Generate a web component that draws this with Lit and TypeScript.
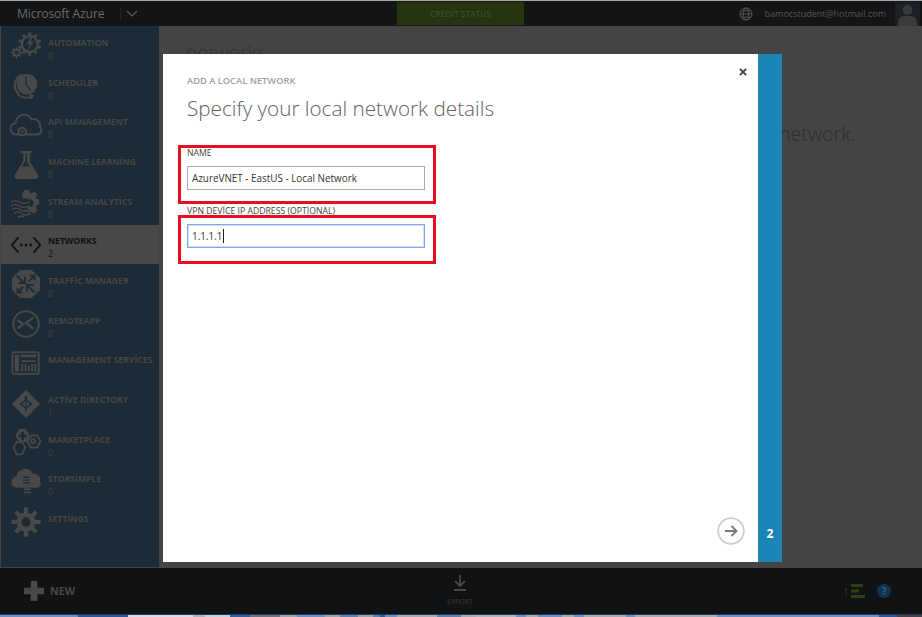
import { LitElement, html, css, svg } from "lit";
import { customElement } from "lit/decorators.js";

const ic = (body: unknown) => html`<svg class="ico" viewBox="0 0 34 34">${body}</svg>`;

const gear = (cx: number, cy: number, r: number, teeth: number, w: number, sw: number) => {
  const t = [];
  for (let i = 0; i < teeth; i++) {
    t.push(svg`<rect x=${cx - w / 2} y=${cy - r - sw * 1.6} width=${w} height=${sw * 1.8} transform="rotate(${(i * 360) / teeth} ${cx} ${cy})"/>`);
  }
  return svg`<g class="f">${t}</g><circle class="s" cx=${cx} cy=${cy} r=${r} stroke-width=${sw}/>`;
};

const icons: Record<string, unknown> = {
  automation: ic(svg`
    ${gear(21, 15, 8.5, 10, 3, 2.4)}
    <path class="f" d="M23 5l-5 10h3l-2 7 6-10h-3l3-7z"/>
    ${gear(7, 24, 3.2, 8, 1.8, 1.8)}`),
  scheduler: ic(svg`
    <path class="s" stroke-width="2.4" d="M10 26A12 12 0 0 1 13 5"/>
    <circle class="f" cx="18" cy="15" r="11"/>
    <path fill="none" stroke="#1c2b35" stroke-width="1.5" d="M17 7v8l5 7"/>
    <path class="s" stroke-width="2" d="M8 26q8 6 16 2"/><path class="f" d="M20 25l6 2-4 5z"/>`),
  api: ic(svg`
    <path class="s" stroke-width="2.2" d="M10 27H7a6 6 0 0 1-1-12 9 9 0 0 1 17-4 7 7 0 0 1 9 8 5 5 0 0 1-2 8H16"/>
    <circle class="s" cx="13" cy="24" r="4" stroke-width="2.2"/><circle class="f" cx="13" cy="24" r="1.4"/>`),
  ml: ic(svg`
    <path class="f" d="M11 2h12v2.500h-2V13l9 15q1 4-3 4H8q-4 0-3-4l9-15V4.500h-3z"/>
    <path fill="#1c2b35" d="M16.500 4.500h1.500v9l3 5H12.500l4-6z"/>`),
  stream: ic(svg`
    <path class="f" d="M13 5l2-4h5l2 4 4-2 3 3-2 4 4 1v5l-4 2 2 5-3 3-5-2-2 2V10h-6z"/>
    <circle fill="#1c2b35" cx="21" cy="15" r="4"/>
    <path class="s" stroke-width="1.600" d="M1 14q5-3 9 0t11 0M1 18q5-3 9 0t11 0M2 22q5-3 9 0t10 0M4 26q5-3 8 0t10 0M8 30q4-2 7 0"/>`),
  networks: html`<svg class="ico" viewBox="0 0 34 34"><path fill="none" stroke="#111" stroke-width="2" d="M9 9l-7 8 7 8M25 9l7 8-7 8"/><g fill="#111"><circle cx="12" cy="17" r="1.500"/><circle cx="17" cy="17" r="1.500"/><circle cx="22" cy="17" r="1.500"/></g></svg>`,
  traffic: ic(svg`
    <path class="f" d="M11 2h12l9 9v12l-9 9H11l-9-9V11z"/>
    <path fill="none" stroke="#1c2b35" stroke-width="2" d="M7 8l8 8M16 9v7H9M26 26l-8-8M18 25v-7h7M8 26l6-6M8 21v5h5M26 8l-6 6M26 13V8h-5"/>`),
  remote: ic(svg`
    <circle class="s" cx="17" cy="17" r="13.500" stroke-width="2.200"/>
    <path class="s" stroke-width="2.500" d="M25 10l-8 6 8 6M8 13l6 4-6 5"/>`),
  mgmt: ic(svg`
    <rect class="s" x="2.500" y="5.500" width="28" height="23" rx="2" stroke-width="2"/>
    <rect class="f" x="5" y="8" width="4.500" height="18"/>
    <path class="f" d="M11 8h17v3H11zM12 14h15v2H12zM12 18h2v8h-2zM15.500 18h2v8h-2zM19 20h2v6h-2zM22.500 18h2v8h-2zM26 18h2v8h-2z"/>`),
  ad: ic(svg`
    <path class="f" d="M17 3l15 15-15 15L2 18z"/>
    <path fill="none" stroke="#1c2b35" stroke-width="1.300" d="M17 10v16M17 13l-5 5 5 5M17 13l5 5-5 5"/>
    <circle fill="#1c2b35" cx="17" cy="11" r="1.500"/><circle fill="#1c2b35" cx="12" cy="18" r="1.500"/><circle fill="#1c2b35" cx="22" cy="18" r="1.500"/>`),
  market: ic(svg`
    <path class="f" d="M15 2h7l4 7-4 7h-7l-4-7z" transform="translate(-5 0)"/>
    <path fill="#1c2b35" d="M12 5h3v3h3v3h-3v3h-3v-3H9V8h3z"/>
    <path class="s" stroke-width="1.800" d="M24 9h6l3.500 6-3.500 7h-7l-3.500-7zM8 16h6l3 6-3 7H8l-3-7z" transform="translate(-1 0)"/>
    <circle class="s" cx="24.500" cy="15" r="2.200" stroke-width="1.800"/>`),
  storsimple: ic(svg`
    <path class="f" d="M8 23a6 6 0 0 1-1-12 9 9 0 0 1 17-3 7 7 0 0 1 8 8 5 5 0 0 1-2 7z"/>
    <path d="M14 12h7M14 15h7M14 18h7" stroke="#1c2b35" stroke-width="1.500"/>
    <path d="M15 21h7M15 24.500h7M15 28h7" stroke="#484848" stroke-width="1.800"/>`),
  settings: ic(svg`${gear(17, 17, 7.5, 8, 4.5, 5)}`),
};

const navItems = [
  ["AUTOMATİON", "0", "automation"],
  ["SCHEDULER", "0", "scheduler"],
  ["API MANAGEMENT", "0", "api"],
  ["MACHİNE LEARNİNG", "0", "ml"],
  ["STREAM ANALYTİCS", "0", "stream"],
  ["NETWORKS", "2", "networks"],
  ["TRAFFİC MANAGER", "0", "traffic"],
  ["REMOTEAPP", "0", "remote"],
  ["MANAGEMENT SERVİCES", "", "mgmt"],
  ["ACTİVE DİRECTORY", "1", "ad"],
  ["MARKETPLACE", "0", "market"],
  ["STORSİMPLE", "0", "storsimple"],
  ["SETTİNGS", "", "settings"],
];

const taskbar: [number, string][] = [
  [78, "#6e8fc4"], [50, "#2a5a9e"], [65, "#d5deea"], [12, "#b0b5b8"], [25, "#c8d2dc"], [20, "#2f5f9f"],
  [30, "#707478"], [17, "#a0a4a8"], [28, "#6e8fc4"], [15, "#a0a4a8"], [18, "#6080b4"], [15, "#a0a4a8"],
  [7, "#6080b4"], [5, "#2a5a9e"], [12, "#6e8fc4"], [40, "#a8acac"], [24, "#6080b4"], [15, "#a8acac"],
  [40, "#b0b5b4"], [10, "#6e8fc4"], [12, "#a8acac"], [24, "#6e8fc4"], [12, "#a8acac"], [10, "#6e8fc4"],
  [42, "#a8acac"], [9, "#6e8fc4"], [40, "#a8acac"], [42, "#a8acac"], [55, "#6e8fc4"], [107, "#6e8fc4"], [18, "#2a5a9e"],
];

@customElement("app-root")
export class AppRoot extends LitElement {
  static styles = css`
    :host {
      display: block;
      width: 922px;
      height: 617px;
      font-family: "Open Sans", "Liberation Sans", sans-serif;
      overflow: hidden;
    }
    .page {
      position: relative;
      width: 922px;
      height: 617px;
      display: flex;
      flex-direction: column;
      background: #444;
    }
    .topedge { height: 1px; background: #a8a8a8; flex: none; }
    .top {
      height: 25px;
      flex: none;
      background: #121416;
      display: flex;
      align-items: center;
      padding: 0 2px 0 17px;
    }
    .brand { font-size: 12.100px; color: #6b6b6b; width: 103px; letter-spacing: -0.1px; }
    .sep { width: 1px; height: 14px; background: #222426; }
    .chev { width: 12px; height: 8px; margin-left: 5px; }
    .spacer { flex: 1; }
    .credit {
      position: absolute;
      left: 397px;
      top: 2px;
      width: 127px;
      height: 23px;
      background: #26340f;
      color: #3d4a2e;
      font-size: 8.300px;
      font-weight: 600;
      display: flex;
      align-items: center;
      justify-content: center;
    }
    .globe { width: 14px; height: 14px; margin-right: 12px; }
    .mail { font-size: 9px; color: #555; font-weight: 400; margin-right: 9px; }
    .avatar { width: 25px; height: 24px; background: #1c2026; display: block; }
    .mid { flex: 1; display: flex; min-height: 0; }
    .side {
      width: 158px;
      margin-left: 1px;
      flex: none;
      background: #1c2b35;
      display: flex;
      flex-direction: column;
    }
    .nav {
      height: 39.670px;
      flex: none;
      display: flex;
      padding: 0 0 0 9px;
      box-sizing: border-box;
    }
    .nav.sel { background: #484848; height: 39px; margin: 0.670px 0 0; }
    .ico { width: 32px; height: 32px; flex: none; margin-top: 4px; }
    .ico .f, .ico .f rect { fill: #484848; }
    .ico .s { fill: none; stroke: #484848; }
    .nav-text { margin-left: 6px; padding-top: 11px; color: #464646; }
    .nav.sel .nav-text { color: #111; padding-top: 10px; }
    .nav-name { font-size: 8.800px; font-weight: 700; line-height: 13px; white-space: nowrap; letter-spacing: -0.1px; }
    .nav-count { font-size: 8.500px; line-height: 11px; font-weight: 400; }
    .main { flex: 1; padding: 15px 0 0 27px; color: #333; position: relative; min-width: 0; }
    .main h2 { margin: 0; font-size: 19.500px; font-weight: 300; line-height: 24px; color: #333; }
    .behind {
      position: absolute;
      left: 620px;
      top: 96px;
      font-size: 19.600px;
      line-height: 24px;
      font-weight: 300;
      color: #2e2e2e;
      white-space: nowrap;
      width: 76px;
      text-align: right;
    }
    .bottom {
      height: 46px;
      flex: none;
      margin-top: 1px;
      background: #111214;
      position: relative;
      display: flex;
      align-items: center;
      padding: 0 31px 0 24px;
    }
    .new { display: flex; align-items: center; gap: 6px; font-size: 10.700px; font-weight: 700; color: #484848; }
    .plus { width: 20px; height: 20px; }
    .export {
      position: absolute;
      left: 440px;
      top: 6px;
      width: 40px;
      display: flex;
      flex-direction: column;
      align-items: center;
      font-size: 7px;
      font-weight: 400;
      color: #3c3c3c;
      gap: 5px;
    }
    .export svg { width: 14px; height: 18px; }
    .one { font-size: 11px; color: #333; margin-right: 1px; }
    .lst { width: 15px; height: 14px; margin-right: 12px; }
    .help {
      width: 14px;
      height: 14px;
      border-radius: 50%;
      background: #12344f;
      color: #25608f;
      font-size: 10.500px;
      font-weight: 700;
      display: flex;
      align-items: center;
      justify-content: center;
    }
    .darkline { height: 1px; background: #1b3a66; flex: none; }
    .strip { height: 2px; flex: none; display: flex; }
    .strip i { display: block; height: 2px; }
    .modal {
      position: absolute;
      left: 163px;
      top: 54px;
      width: 619px;
      height: 508px;
      display: flex;
    }
    .body {
      flex: 1;
      background: #fff;
      position: relative;
      padding: 21px 24px 0;
      box-sizing: border-box;
    }
    .rail {
      width: 24px;
      background: #1b85b5;
      display: flex;
      flex-direction: column;
      justify-content: flex-end;
      align-items: center;
      padding-bottom: 20px;
      box-sizing: border-box;
      color: #fff;
      font-size: 12px;
      font-weight: 700;
      line-height: 16px;
    }
    .eyebrow { font-size: 9.300px; font-weight: 600; color: #a0a0a0; line-height: 12px; }
    h1 {
      margin: 6px 0 0;
      font-size: 20.700px;
      font-weight: 300;
      line-height: 30px;
      color: #5f5f5f;
      white-space: nowrap;
    }
    .lbl { font-size: 8.700px; font-weight: 400; color: #444; line-height: 12px; white-space: nowrap; }
    .lbl.first { margin-top: 24px; }
    .lbl.second { margin-top: 15px; }
    .field {
      width: 238px;
      height: 24px;
      box-sizing: border-box;
      border: 1px solid #adadad;
      margin-top: 7px;
      padding-left: 4px;
      display: flex;
      align-items: center;
      font-size: 9.900px;
      color: #333;
      white-space: nowrap;
    }
    .field.focus { border: 1px solid #7fa6e0; box-shadow: inset 0 0 0 1px #d3e1f6; margin-top: 7px; }
    .caret { width: 1px; height: 14px; background: #222; margin-left: 1px; }
    .mark { position: absolute; left: 15px; width: 258px; border: 3px solid #e60f20; box-sizing: border-box; }
    .mark.a { top: 91px; height: 59px; }
    .mark.b { top: 161px; height: 49px; }
    .close { position: absolute; right: 11px; top: 14px; width: 8px; height: 8px; }
    .next { position: absolute; right: 13px; bottom: 17px; width: 28px; height: 28px; }
  `;

  render() {
    return html`<div class="page">
      <div class="topedge"></div>
      <header class="top">
        <span class="brand">Microsoft Azure</span>
        <span class="sep"></span>
        <svg class="chev" viewBox="0 0 12 8"><path fill="none" stroke="#5a5a5a" stroke-width="1.200" d="M1 1l5 5 5-5"/></svg>
        <span class="spacer"></span>
        <svg class="globe" viewBox="0 0 14 14" fill="none" stroke="#555" stroke-width="1">
          <circle cx="7" cy="7" r="6"/><ellipse cx="7" cy="7" rx="2.800" ry="6"/><path d="M1 7h12M2 3.800h10M2 10.200h10"/>
        </svg>
        <span class="mail">bamocstudent@hotmail.com</span>
        <svg class="avatar" viewBox="0 0 25 24"><circle cx="12.500" cy="8" r="5" fill="#3a3a3a"/><path d="M3 24v-4q0-5 6-6h7q6 1 6 6v4z" fill="#3a3a3a"/></svg>
      </header>
      <div class="credit">CREDİT STATUS</div>
      <div class="mid">
        <nav class="side">
          ${navItems.map(([name, count, icon]) => html`
            <div class="nav ${icon === "networks" ? "sel" : ""}">
              ${icons[icon]}
              <div class="nav-text">
                <div class="nav-name">${name}</div>
                <div class="nav-count">${count}</div>
              </div>
            </div>`)}
        </nav>
        <main class="main">
          <h2>networks</h2>
          <div class="behind">network.</div>
        </main>
      </div>
      <footer class="bottom">
        <div class="new">
          <svg class="plus" viewBox="0 0 21 21"><path fill="#484848" d="M7 0h7v7h7v7h-7v7H7v-7H0V7h7z"/></svg>
          NEW
        </div>
        <div class="export">
          <svg viewBox="0 0 14 18"><path fill="none" stroke="#484848" stroke-width="1.800" d="M7 1v10M2 7l5 5 5-5"/><path fill="#484848" d="M1 15h12v2H1z"/></svg>
          EXPORT
        </div>
        <span class="spacer"></span>
        <span class="one">1</span>
        <svg class="lst" viewBox="0 0 15 14"><path fill="#2f3f12" d="M1 0h12v3H1zM1 5.500h8v3H1zM1 11h14v3H1z"/></svg>
        <span class="help">?</span>
      </footer>
      <div class="darkline"></div>
      <div class="strip">${taskbar.map(([w, c]) => html`<i style="width:${w}px;background:${c}"></i>`)}</div>
      <section class="modal">
        <div class="body">
          <div class="eyebrow">ADD A LOCAL NETWORK</div>
          <h1>Specify your local network details</h1>
          <div class="lbl first">NAME</div>
          <div class="field">AzureVNET - EastUS - Local Network</div>
          <div class="lbl second">VPN DEVİCE IP ADDRESS (OPTİONAL)</div>
          <div class="field focus">1.1.1.1<span class="caret"></span></div>
          <div class="mark a"></div>
          <div class="mark b"></div>
          <svg class="close" viewBox="0 0 9 9"><path stroke="#444" stroke-width="2.200" d="M1 1l7 7M8 1l-7 7"/></svg>
          <svg class="next" viewBox="0 0 28 28" fill="none"><circle cx="14" cy="14" r="12.800" stroke="#ccc" stroke-width="1.800"/><path stroke="#777" stroke-width="1.800" d="M8 14h11M14.500 9l5 5-5 5"/></svg>
        </div>
        <div class="rail">2</div>
      </section>
    </div>`;
  }
}
